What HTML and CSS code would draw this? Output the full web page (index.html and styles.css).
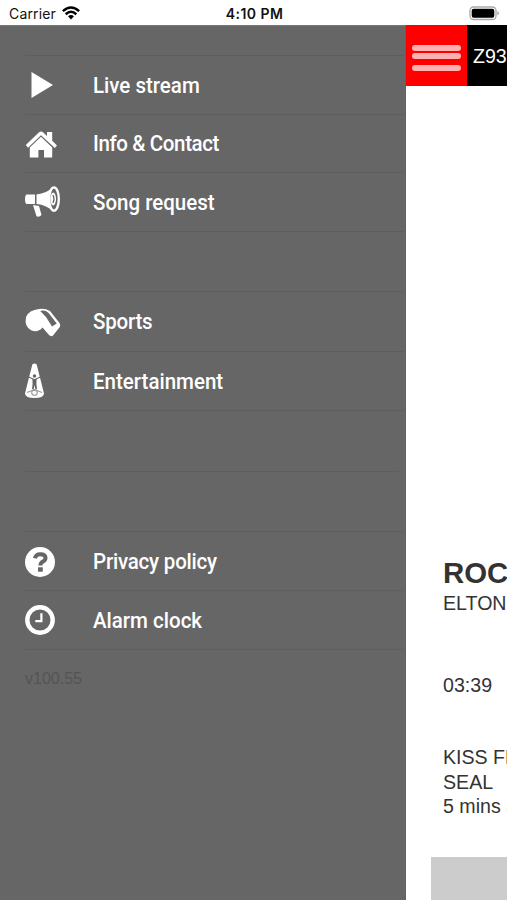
FILE: index.html
```html
<!DOCTYPE html>
<html lang="en">
<head>
<meta charset="utf-8">
<title>Z93</title>
<link rel="stylesheet" href="styles.css">
</head>
<body>
<header class="status">
  <div class="carrier">
    <span>Carrier</span>
    <svg width="18" height="14" viewBox="0 0 18 14"><g fill="none" stroke="#000" stroke-width="2.5"><path d="M.9 5.2Q9-2.3 17.1 5.2"/><path d="M3.7 8.2Q9 3.4 14.3 8.2"/></g><path d="M6 10.2Q9 7.8 12 10.2L9 13.4Z"/></svg>
  </div>
  <span class="time">4:10 PM</span>
  <svg class="battery" width="31" height="15" viewBox="0 0 31 15"><rect x="1" y="1" width="26" height="12.5" rx="3.5" fill="#fff" stroke="#aaa" stroke-width="1.3"/><rect x="2.7" y="2.7" width="22.6" height="9.1" rx="2" fill="#000"/><path d="M28.5 5Q31 7.2 28.5 9.5Z" fill="#888"/></svg>
</header>
<main class="app">
  <nav class="drawer">
    <ul class="menu">
      <li class="item"><svg class="icon" viewBox="0 0 36 36"><path d="M6.5 5L28 18L6.5 31Z"/></svg><span class="label">Live stream</span></li>
      <li class="item"><svg class="icon" viewBox="0 0 36 36"><path d="M.8 19L14 6.3Q16 4.6 18 6.3L22 10V6H27.2V14.8L32 19.5L29.8 22L16 9.2L3 21.7Z"/><path d="M4.8 21.4L16 10.8L27.2 21.4V31.5H19V24H13.4V31.5H4.8Z"/></svg><span class="label info">Info &amp; Contact</span></li>
      <li class="item"><svg class="icon" viewBox="0 0 36 36"><path d="M2 10.5H10V20H2Q0 20 0 15.2T2 10.5ZM11.5 10.5Q22 9.5 28 2.8V27.5Q22 21 11.5 20ZM8 21L14 22L16.5 31Q14 33.5 11.5 32.2Z"/><ellipse cx="29" cy="15" rx="4.8" ry="11.6" fill="#666" stroke="#fff" stroke-width="2.4"/><ellipse cx="28.2" cy="15" rx="2.8" ry="6.4"/><path d="M28 11Q30 15 28 19" fill="none" stroke="#666" stroke-width="1.2"/></svg><span class="label">Song request</span></li>
      <li class="item spacer"></li>
      <li class="item"><svg class="icon raised" viewBox="0 0 36 36"><path d="M1 14Q4 7 14 6Q20 5 25 8L34.5 20Q36 23 34 25L28 32.5Q26 34 24 32L17.5 24.5Q13 30 6.5 27.5Q-1 24 1 14Z"/><path d="M15.2 8Q20 6.6 23.6 10L31.8 20.5L27 23.5L21 14Z" fill="#666"/></svg><span class="label sports">Sports</span></li>
      <li class="item"><svg class="icon" viewBox="0 0 36 36"><path d="M7.3 1.5Q9.5-.5 11.7 1.5L19 30.5Q18.5 35 9.5 35T0 30.5Z"/><g fill="none" stroke="#666" stroke-width="1.1"><path d="M3.8 14L9.5 16.7L15.3 14"/><path d="M2 29.5Q9.5 25.5 17 29.5" stroke="#999"/><circle cx="9.5" cy="29.4" r="2.8" stroke="#999"/></g><circle cx="9.5" cy="13" r="1.7" fill="#666"/><path d="M7.4 16H11.6L11.4 21L12 26H10.3L9.5 22L8.7 26H7L7.6 21Z" fill="#666"/></svg><span class="label">Entertainment</span></li>
      <li class="item spacer"></li>
      <li class="item spacer short"></li>
      <li class="item"><svg class="icon lowered" viewBox="0 0 36 36"><circle cx="15" cy="18" r="15"/><path d="M9.9 14.3Q10.8 10.3 15.2 10.3Q20.5 10.3 20.5 14.1Q20.5 16.2 18 17.6Q15.4 19 15.4 21.5" fill="none" stroke="#666" stroke-width="4"/><rect x="13" y="23.3" width="4.8" height="4.4" fill="#666"/></svg><span class="label privacy">Privacy policy</span></li>
      <li class="item"><svg class="icon" viewBox="0 0 36 36"><circle cx="15" cy="18" r="12.7" fill="none" stroke="#fff" stroke-width="4.4"/><path d="M16.4 11.2V19.2H10.3" fill="none" stroke="#fff" stroke-width="2.2"/></svg><span class="label">Alarm clock</span></li>
    </ul>
    <p class="version">v100.55</p>
  </nav>
  <section class="page">
    <header class="bar">
      <div class="toggle"><i></i><i></i><i></i></div>
      <span class="station">Z93</span>
    </header>
    <div class="playing">
      <h1>ROCKET MAN</h1>
      <p class="artist">ELTON JOHN</p>
      <p class="duration">03:39</p>
      <div class="previous">
        <p>KISS FROM A ROSE</p>
        <p>SEAL</p>
        <p>5 mins ago</p>
      </div>
    </div>
    <div class="ad"></div>
  </section>
</main>
</body>
</html>
```
FILE: styles.css
```css
* { box-sizing: border-box; }
body { margin: 0; width: 507px; height: 900px; overflow: hidden; background: #fff; font-family: "Liberation Sans", Arial, sans-serif; }
p, h1, ul { margin: 0; padding: 0; }
svg { display: block; }
.status { height: 25px; display: grid; grid-template-columns: 1fr 60px 1fr; align-items: center; padding: 2px 7px 0 9px; font-family: Inter, sans-serif; font-size: 14px; color: #111; white-space: nowrap; }
.carrier { display: flex; align-items: center; gap: 6px; letter-spacing: .15px; }
.carrier svg { margin-top: -2px; }
.time { font-weight: 600; font-size: 14px; letter-spacing: .45px; text-align: center; }
.battery { justify-self: end; }
.app { height: 875px; display: grid; grid-template-columns: 406px 101px; }
.drawer { background: #666; padding: 30px 1px 0 25px; border-top: 1px solid #777; border-right: 1px solid #606060; }
.menu { list-style: none; margin-top: -1px; display: grid; grid-template-rows: 59px 58px 59px 60px 60px 59px 61px 60px 59px 59px; border-bottom: 1px solid #5e5e5e; }
.item { display: flex; align-items: center; border-top: 1px solid #5e5e5e; }
.short { margin-right: 5px; }
.icon { width: 36px; height: 36px; margin-right: 32px; fill: #fff; overflow: visible; }
.raised { margin-bottom: 2px; }
.lowered { margin-top: 1px; }
.label { font: 500 22px/28px Roboto, sans-serif; color: #fff; white-space: nowrap; margin-top: 1px; transform: scaleX(.932); transform-origin: left; }
.info { letter-spacing: -.4px; }
.sports, .privacy { letter-spacing: -.22px; }
.version { margin-top: 19px; font-size: 16px; line-height: 20px; color: #545454; }
.page { display: flex; flex-direction: column; overflow: hidden; white-space: nowrap; color: #333; }
.bar { height: 61px; display: flex; flex: none; background: #000; }
.toggle { width: 61px; background: #f00; padding: 20px 6px 0; display: flex; flex-direction: column; }
.toggle i { height: 6px; border-radius: 3px; background: #ffb0b0; margin-bottom: 2px; }
.toggle i:last-child { margin-top: 4px; }
.station { color: #fff; font-size: 19.6px; line-height: 63px; padding-left: 6px; }
.playing { height: 771px; padding: 469px 0 0 37px; font-size: 19.6px; line-height: 24px; }
.playing h1 { font-size: 29.4px; line-height: 36px; }
.artist { margin-top: 0; }
.duration { margin-top: 58px; }
.previous { margin-top: 48px; line-height: 24.5px; }
.ad { height: 43px; margin-left: 25px; background: #ccc; }
```
